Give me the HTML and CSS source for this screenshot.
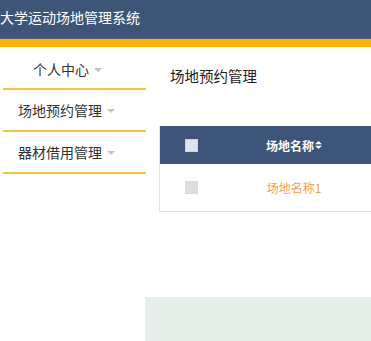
FILE: index.html
```html
<!DOCTYPE html>
<html lang="zh">
<head>
<meta charset="utf-8">
<link rel="stylesheet" href="styles.css">
</head>
<body>
<header class="topbar">
  <div class="brand">大学运动场地管理系统</div>
</header>
<div class="stripe"></div>
<div class="main">
  <nav class="sidebar">
    <div class="menu-item first">个人中心<span class="caret"></span></div>
    <div class="menu-item">场地预约管理<span class="caret"></span></div>
    <div class="menu-item">器材借用管理<span class="caret"></span></div>
  </nav>
  <section class="content">
    <h2 class="page-title">场地预约管理</h2>
    <div class="table">
      <div class="row head">
        <div class="cell check"><span class="box"></span></div>
        <div class="cell name">场地名称<svg class="sort" width="7" height="8" viewBox="0 0 7 8"><path d="M3.5 0 L7 3.3 H0 Z M0 4.7 H7 L3.5 8 Z" fill="#fff"/></svg></div>
      </div>
      <div class="row body">
        <div class="cell check"><span class="box"></span></div>
        <div class="cell name link">场地名称1</div>
      </div>
    </div>
  </section>
</div>
<div class="footer-area">
  <div class="footer-pad"></div>
  <div class="footer-green"></div>
</div>
</body>
</html>
```
FILE: styles.css
```css
html, body {
  margin: 0;
  padding: 0;
  width: 371px;
  height: 341px;
  overflow: hidden;
  background: #fff;
  font-family: "Microsoft YaHei", "Noto Sans CJK SC", "Noto Sans", sans-serif;
}
.topbar {
  height: 37px;
  background: #3d5677;
  border-bottom: 2px solid #5b5a52;
  display: flex;
  align-items: center;
}
.brand {
  color: #fff;
  font-size: 14px;
  line-height: 20px;
  margin-top: -3px;
}
.stripe {
  height: 8px;
  background: #fbb30f;
}
.main {
  display: flex;
  height: 250px;
}
.sidebar {
  width: 143px;
  margin-left: 3px;
  flex: none;
}
.menu-item {
  height: 40px;
  border-bottom: 2px solid #f4c545;
  display: flex;
  align-items: center;
  padding-left: 15px;
  font-size: 14px;
  color: #333;
}
.menu-item.first {
  height: 39px;
  padding-top: 2px;
  padding-left: 30px;
}
.caret {
  display: inline-block;
  margin-left: 5px;
  margin-top: 2px;
  width: 0;
  height: 0;
  border-left: 4px solid transparent;
  border-right: 4px solid transparent;
  border-top: 4px solid #c4c4c4;
}
.content {
  flex: 1;
  padding-left: 13px;
  overflow: hidden;
}
.page-title {
  margin: 0;
  padding: 19px 0 0 11px;
  font-size: 14.5px;
  font-weight: normal;
  color: #222;
  line-height: 20px;
}
.table {
  margin-top: 40px;
  width: 300px;
  border-left: 1px solid #e2e2e2;
  border-bottom: 1px solid #e2e2e2;
}
.row {
  display: flex;
  align-items: center;
}
.row.head {
  height: 38px;
  background: #3c5578;
}
.row.body {
  height: 47px;
  background: #fff;
}
.cell.check {
  width: 63px;
  display: flex;
  justify-content: center;
}
.box {
  width: 13px;
  height: 13px;
  display: block;
}
.head .box {
  background: #dfe4ec;
  box-shadow: inset 0 0 0 1px #c9d2df;
}
.body .box {
  background: #dcdde2;
}
.cell.name {
  width: 142px;
  display: flex;
  justify-content: center;
  align-items: center;
  font-size: 12px;
}
.head .name {
  color: #fff;
  font-weight: bold;
}
.sort {
  margin-left: 1px;
}
.name.link {
  color: #f2a24e;
}
.footer-area {
  display: flex;
  height: 44px;
}
.footer-pad {
  width: 145px;
  flex: none;
}
.footer-green {
  flex: 1;
  background: #e4efea;
}
```
